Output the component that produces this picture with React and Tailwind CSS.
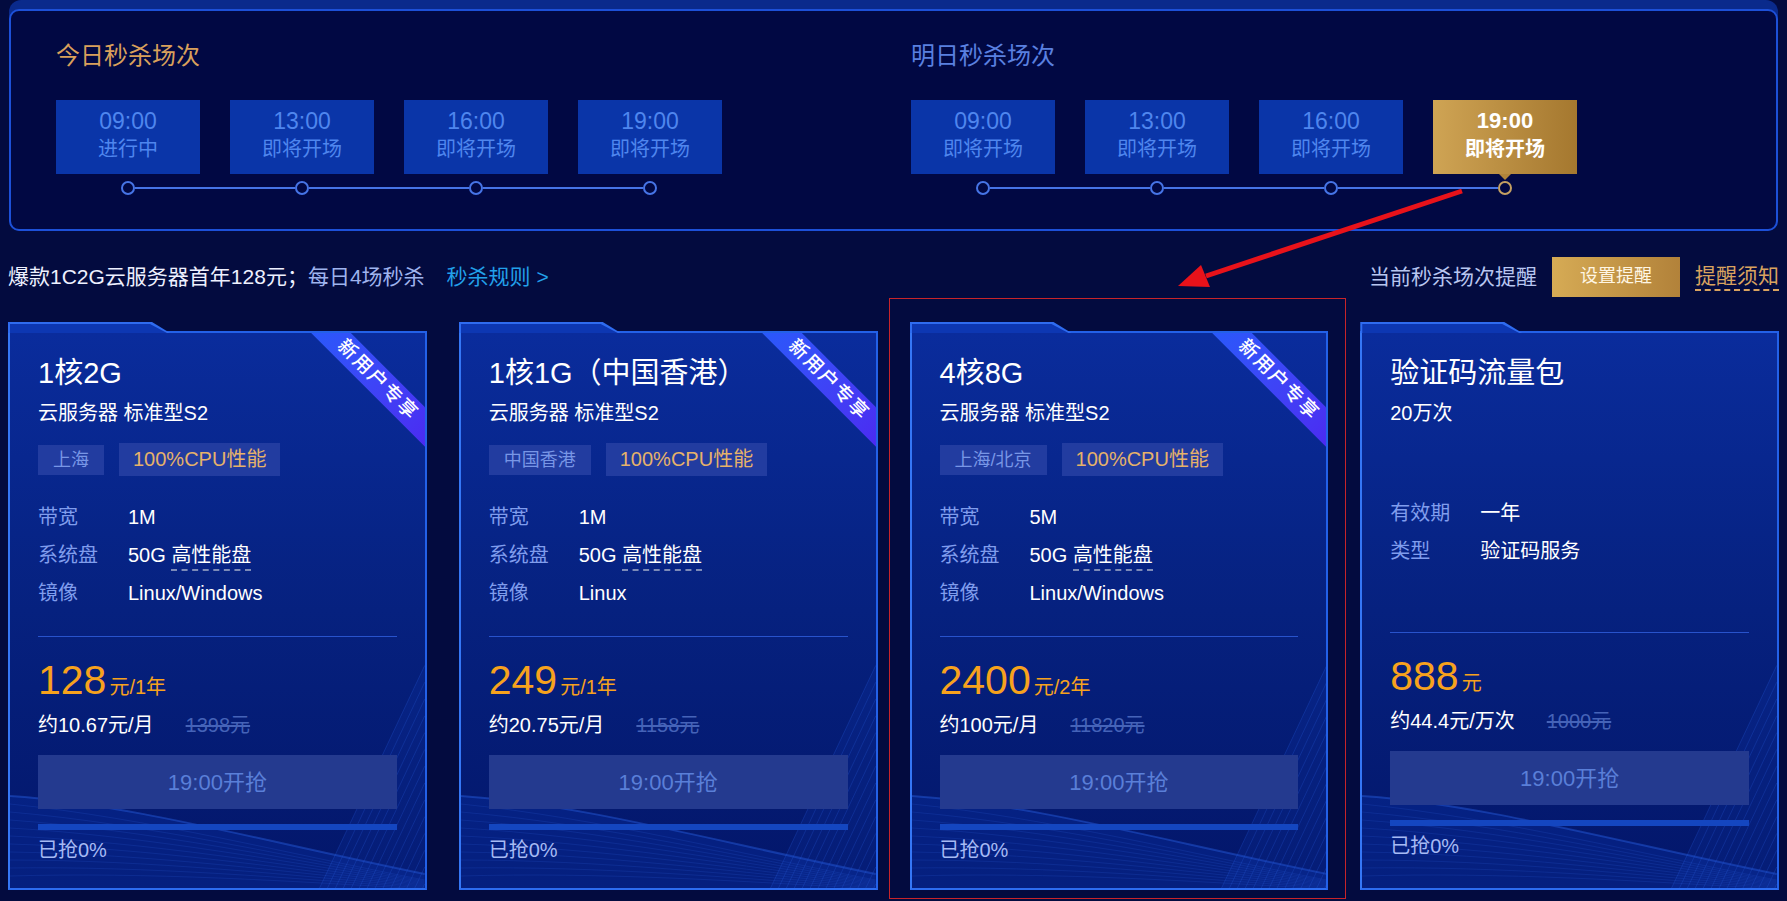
import React from 'react';

const today = [
  { time: '09:00', label: '进行中' },
  { time: '13:00', label: '即将开场' },
  { time: '16:00', label: '即将开场' },
  { time: '19:00', label: '即将开场' },
];

const tomorrow = [
  { time: '09:00', label: '即将开场' },
  { time: '13:00', label: '即将开场' },
  { time: '16:00', label: '即将开场' },
  { time: '19:00', label: '即将开场', active: true },
];

const cards = [
  {
    title: '1核2G',
    sub: '云服务器 标准型S2',
    region: '上海',
    rows: [
      ['带宽', '1M'],
      ['系统盘', 'disk'],
      ['镜像', 'Linux/Windows'],
    ],
    price: '128',
    unit: '元/1年',
    monthly: '约10.67元/月',
    old: '1398元',
    ribbon: true,
  },
  {
    title: '1核1G（中国香港）',
    sub: '云服务器 标准型S2',
    region: '中国香港',
    rows: [
      ['带宽', '1M'],
      ['系统盘', 'disk'],
      ['镜像', 'Linux'],
    ],
    price: '249',
    unit: '元/1年',
    monthly: '约20.75元/月',
    old: '1158元',
    ribbon: true,
  },
  {
    title: '4核8G',
    sub: '云服务器 标准型S2',
    region: '上海/北京',
    rows: [
      ['带宽', '5M'],
      ['系统盘', 'disk'],
      ['镜像', 'Linux/Windows'],
    ],
    price: '2400',
    unit: '元/2年',
    monthly: '约100元/月',
    old: '11820元',
    ribbon: true,
  },
  {
    title: '验证码流量包',
    sub: '20万次',
    rows: [
      ['有效期', '一年'],
      ['类型', '验证码服务'],
    ],
    price: '888',
    unit: '元',
    monthly: '约44.4元/万次',
    old: '1000元',
  },
];

const SlotGroup = ({ title, titleClass, items, className = '' }) => (
  <div className={className}>
    <div className={`text-[24px] leading-[32px] ${titleClass}`}>{title}</div>
    <div className="mt-[28px] flex gap-[30px]">
      {items.map((it, i) =>
        it.active ? (
          <div
            key={i}
            className="relative w-[144px] h-[74px] pt-[7px] flex flex-col items-center bg-linear-to-r from-[#cfa454] to-[#a5782f] text-white font-bold"
          >
            <div className="text-[22px] leading-[28px]">{it.time}</div>
            <div className="text-[20px] leading-[28px]">{it.label}</div>
            <div className="absolute bottom-[-6px] left-1/2 -translate-x-1/2 w-0 h-0 border-l-[6px] border-r-[6px] border-t-[6px] border-l-transparent border-r-transparent border-t-[#b0843a]" />
          </div>
        ) : (
          <div
            key={i}
            className="w-[144px] h-[74px] pt-[7px] flex flex-col items-center bg-[#0a35a8] text-[#4f86ee]"
          >
            <div className="text-[23px] leading-[28px]">{it.time}</div>
            <div className="text-[20px] leading-[28px]">{it.label}</div>
          </div>
        )
      )}
    </div>
    <div className="mt-[7px] h-[14px] pl-[65px] flex items-center">
      {items.map((it, i) => (
        <React.Fragment key={i}>
          {i > 0 && <div className="w-[160px] h-[2px] bg-[#4674e6]" />}
          <div
            className={`w-[14px] h-[14px] rounded-full border-2 bg-[#010843] ${
              it.active ? 'border-[#c4a062]' : 'border-[#4674e6]'
            }`}
          />
        </React.Fragment>
      ))}
    </div>
  </div>
);

const Waves = () => {
  const curves = Array.from({ length: 10 }, (_, i) => i);
  const mesh = Array.from({ length: 14 }, (_, i) => i);
  return (
    <svg
      className="absolute left-0 bottom-0 w-full h-[260px] pointer-events-none"
      viewBox="0 0 418 260"
      preserveAspectRatio="none"
    >
      <path d="M0,168 C120,176 250,212 418,246 L418,260 L0,260 Z" fill="#0a36b0" opacity="0.3" />
      <path d="M0,168 C120,176 250,212 418,246" stroke="#2d66ea" strokeWidth="2" fill="none" opacity="0.4" />
      {curves.map((i) => (
        <path
          key={i}
          d={`M0,${176 + i * 8} C140,${190 + i * 6} 280,${226 + i * 3} 418,${252 + i}`}
          stroke="#2a5ad6"
          strokeWidth="0.7"
          fill="none"
          opacity="0.3"
        />
      ))}
      {mesh.map((k) => (
        <line
          key={k}
          x1={312 + k * 8}
          y1="260"
          x2="418"
          y2={260 - (106 - k * 8) * 2.1}
          stroke="#2f67ea"
          strokeWidth="0.7"
          opacity="0.35"
        />
      ))}
      <path d="M312,260 L418,37 L418,260 Z" fill="#1240c0" opacity="0.15" />
    </svg>
  );
};

const Card = ({ c }) => (
  <div className="relative h-[568px] pt-[9px]">
    <div className="relative h-[559px] border-2 border-[#2361e8] border-l-[#3577f6] border-b-[#2d6cf0] bg-linear-to-b from-[#0a2c9c] via-[#06217f] to-[#03166a] overflow-hidden px-[28px] pt-[23px]">
      <Waves />
      <div className="relative">
        <div className="h-[34px] text-[29px] leading-[34px] text-white">{c.title}</div>
        <div className="mt-[9px] text-[20px] leading-[28px] text-white">{c.sub}</div>
        {c.region ? (
          <div className="mt-[16px] h-[33px] flex items-center gap-[15px]">
            <div className="h-[30px] px-[15px] bg-[#223ca0] text-[#7896e6] text-[18px] leading-[30px]">
              {c.region}
            </div>
            <div className="h-[33px] px-[14px] bg-[#223ca0] text-[#e6b26a] text-[20px] leading-[33px]">
              100%CPU性能
            </div>
          </div>
        ) : (
          <div className="mt-[16px] h-[29px]" />
        )}
        <div className="mt-[22px] h-[114px]">
          {c.rows.map(([k, v]) => (
            <div key={k} className="flex h-[38px] text-[20px] leading-[38px]">
              <div className="w-[90px] text-[#809ded]">{k}</div>
              {v === 'disk' ? (
                <div className="text-white">
                  50G{' '}
                  <span className="inline-block leading-[28px] border-b-2 border-dashed border-[#7d8bb8]">
                    高性能盘
                  </span>
                </div>
              ) : (
                <div className="text-white">{v}</div>
              )}
            </div>
          ))}
        </div>
        <div className="mt-[24px] h-px bg-[#2853cc]" />
        <div className="mt-[23px] h-[40px] flex items-baseline text-[#f7a21d]">
          <span className="text-[41px] leading-[40px]">{c.price}</span>
          <span className="ml-[3px] text-[20px]">{c.unit}</span>
        </div>
        <div className="mt-[11px] flex gap-[32px] leading-[28px]">
          <span className="text-[20px] text-white">{c.monthly}</span>
          <span className="text-[20px] text-[#4563b8] line-through">{c.old}</span>
        </div>
        <div className="mt-[16px] h-[54px] flex items-center justify-center bg-[#243a8f] text-[#5a7fd8] text-[22px]">
          19:00开抢
        </div>
        <div className="mt-[15px] h-[6px] bg-[#1446c0]" />
        <div className="mt-[6px] text-[20px] leading-[28px] text-[#a6baf4]">已抢0%</div>
      </div>
      {c.ribbon && (
        <div className="absolute top-[33px] right-[-63px] w-[220px] h-[28px] rotate-45 bg-linear-to-r from-[#1b5ffc] to-[#4e1cf0] flex items-center justify-center text-white text-[19px] font-medium tracking-[2px]">
          新用户专享
        </div>
      )}
    </div>
    <div className="absolute left-0 top-0 w-[162px] h-[11px] bg-[#2f6cf0] [clip-path:polygon(0_0,144px_0,162px_100%,0_100%)]" />
    <div className="absolute left-[2px] top-[2px] w-[157px] h-[9px] bg-[#0d37b2] [clip-path:polygon(0_0,140px_0,157px_100%,0_100%)]" />
  </div>
);

export default function App() {
  return (
    <div className="relative w-[1787px] h-[901px] overflow-hidden bg-[#030b3f] font-['Liberation_Sans','Noto_Sans_CJK_SC',sans-serif]">
      <div className="px-[9px]">
        <div className="rounded-[12px] bg-[#0a2a8c] pt-[9px]">
          <div className="h-[222px] rounded-[10px] border-2 border-[#1d50d8] bg-[#010843] pl-[45px] pt-[29px] flex">
            <SlotGroup title="今日秒杀场次" titleClass="text-[#d9a05b]" items={today} className="w-[855px]" />
            <SlotGroup title="明日秒杀场次" titleClass="text-[#5a80e0]" items={tomorrow} />
          </div>
        </div>
      </div>

      <div className="h-[91px] px-[8px] flex items-center justify-between text-[21px]">
        <div className="flex items-center">
          <span className="text-[#eef1ff]">爆款1C2G云服务器首年128元；</span>
          <span className="text-[#9fb3ee]">每日4场秒杀</span>
          <span className="ml-[22px] text-[#22a0ea]">秒杀规则 &gt;</span>
        </div>
        <div className="flex items-center gap-[15px]">
          <span className="text-[#b8c6f0]">当前秒杀场次提醒</span>
          <div className="w-[128px] h-[40px] flex items-center justify-center bg-linear-to-r from-[#d6ab55] to-[#b2823a] text-[#fff6e4] text-[18px]">
            设置提醒
          </div>
          <span className="text-[#d9a35f] leading-[26px] border-b-2 border-dashed border-[#d9a35f]">提醒须知</span>
        </div>
      </div>

      <div className="grid grid-cols-4 gap-x-[32px] px-[8px]">
        {cards.map((c, i) => (
          <Card key={i} c={c} />
        ))}
      </div>

      <div className="absolute left-[889px] top-[298px] w-[457px] h-[601px] border border-[#c8242a] pointer-events-none" />
      <svg className="absolute inset-0 w-[1787px] h-[901px] pointer-events-none" viewBox="0 0 1787 901">
        <line x1="1462" y1="191" x2="1206" y2="276" stroke="#e8121a" strokeWidth="5" />
        <polygon points="1178,286 1210,287 1201,265" fill="#e8121a" />
      </svg>
    </div>
  );
}
